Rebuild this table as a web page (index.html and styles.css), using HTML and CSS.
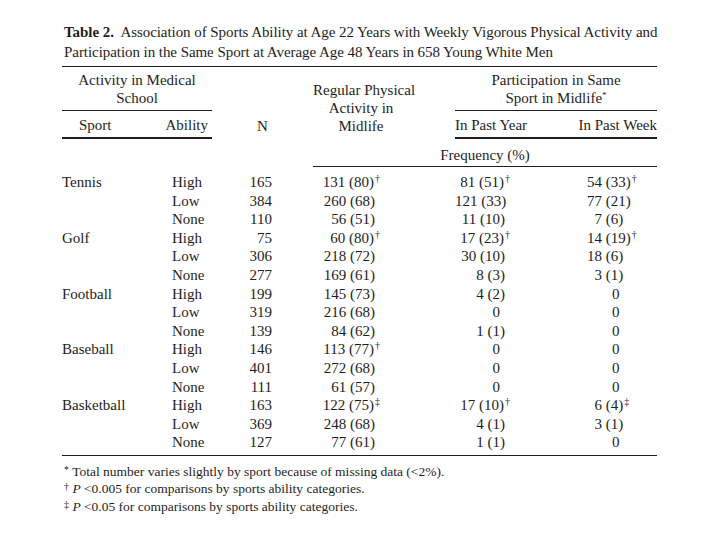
FILE: index.html
```html
<!DOCTYPE html>
<html lang="en">
<head>
<meta charset="utf-8">
<title>Table 2</title>
<link rel="stylesheet" href="styles.css">
</head>
<body>
<div class="page">
  <h1 class="title"><b>Table 2.</b>&nbsp; Association of Sports Ability at Age 22 Years with Weekly Vigorous Physical Activity and<br>Participation in the Same Sport at Average Age 48 Years in 658 Young White Men</h1>
  <table class="tbl">
    <colgroup>
      <col class="c1"><col class="c2"><col class="c3"><col class="c4"><col class="c5"><col class="c6">
    </colgroup>
    <thead>
      <tr class="hr1">
        <th colspan="2" class="grp">Activity in Medical<br>School</th>
        <th rowspan="2" class="hn">N</th>
        <th rowspan="2" class="hreg">Regular Physical<br>Activity in<br>Midlife</th>
        <th colspan="2" class="grp">Participation in Same<br>Sport in Midlife<span class="ast">*</span></th>
      </tr>
      <tr class="hr2">
        <th class="hsport">Sport</th>
        <th class="hab">Ability</th>
        <th class="hyr">In Past Year</th>
        <th class="hwk">In Past Week</th>
      </tr>
      <tr class="hr3">
        <td colspan="3"></td>
        <td colspan="3" class="freq">Frequency (%)</td>
      </tr>
    </thead>
    <tbody>
      <tr class="first"><td class="sp">Tennis</td><td class="ab">High</td><td class="n">165</td><td class="reg">131 (80)<span class="d">†</span></td><td class="yr">81 (51)<span class="d">†</span></td><td class="wk"><span class="num">54</span> (33)<span class="d">†</span></td></tr>
      <tr><td class="sp"></td><td class="ab">Low</td><td class="n">384</td><td class="reg">260 (68)</td><td class="yr">121 (33)</td><td class="wk"><span class="num">77</span> (21)</td></tr>
      <tr><td class="sp"></td><td class="ab">None</td><td class="n">110</td><td class="reg">56 (51)</td><td class="yr">11 (10)</td><td class="wk"><span class="num">7</span> (6)</td></tr>
      <tr><td class="sp">Golf</td><td class="ab">High</td><td class="n">75</td><td class="reg">60 (80)<span class="d">†</span></td><td class="yr">17 (23)<span class="d">†</span></td><td class="wk"><span class="num">14</span> (19)<span class="d">†</span></td></tr>
      <tr><td class="sp"></td><td class="ab">Low</td><td class="n">306</td><td class="reg">218 (72)</td><td class="yr">30 (10)</td><td class="wk"><span class="num">18</span> (6)</td></tr>
      <tr><td class="sp"></td><td class="ab">None</td><td class="n">277</td><td class="reg">169 (61)</td><td class="yr">8 (3)</td><td class="wk"><span class="num">3</span> (1)</td></tr>
      <tr><td class="sp">Football</td><td class="ab">High</td><td class="n">199</td><td class="reg">145 (73)</td><td class="yr">4 (2)</td><td class="wk zero">0</td></tr>
      <tr><td class="sp"></td><td class="ab">Low</td><td class="n">319</td><td class="reg">216 (68)</td><td class="yr zero">0</td><td class="wk zero">0</td></tr>
      <tr><td class="sp"></td><td class="ab">None</td><td class="n">139</td><td class="reg">84 (62)</td><td class="yr">1 (1)</td><td class="wk zero">0</td></tr>
      <tr><td class="sp">Baseball</td><td class="ab">High</td><td class="n">146</td><td class="reg">113 (77)<span class="d">†</span></td><td class="yr zero">0</td><td class="wk zero">0</td></tr>
      <tr><td class="sp"></td><td class="ab">Low</td><td class="n">401</td><td class="reg">272 (68)</td><td class="yr zero">0</td><td class="wk zero">0</td></tr>
      <tr><td class="sp"></td><td class="ab">None</td><td class="n">111</td><td class="reg">61 (57)</td><td class="yr zero">0</td><td class="wk zero">0</td></tr>
      <tr><td class="sp">Basketball</td><td class="ab">High</td><td class="n">163</td><td class="reg">122 (75)<span class="d">‡</span></td><td class="yr">17 (10)<span class="d">†</span></td><td class="wk"><span class="num">6</span> (4)<span class="d">‡</span></td></tr>
      <tr><td class="sp"></td><td class="ab">Low</td><td class="n">369</td><td class="reg">248 (68)</td><td class="yr">4 (1)</td><td class="wk"><span class="num">3</span> (1)</td></tr>
      <tr class="last"><td class="sp"></td><td class="ab">None</td><td class="n">127</td><td class="reg">77 (61)</td><td class="yr">1 (1)</td><td class="wk zero">0</td></tr>
    </tbody>
  </table>
  <div class="notes">
    <p><span class="mk">*</span> Total number varies slightly by sport because of missing data (&lt;2%).</p>
    <p><span class="mk">†</span> <i>P</i> &lt;0.005 for comparisons by sports ability categories.</p>
    <p><span class="mk">‡</span> <i>P</i> &lt;0.05 for comparisons by sports ability categories.</p>
  </div>
</div>
</body>
</html>
```
FILE: styles.css
```css
html, body {
  margin: 0;
  padding: 0;
  background: #ffffff;
}
body {
  font-family: "Liberation Serif", "Times New Roman", serif;
  color: #1e1e1e;
}
.page {
  width: 595px;
  padding: 22px 0 0 62px;
}
.title {
  margin: 0;
  padding-left: 2px;
  font-size: 15px;
  font-weight: normal;
  line-height: 20px;
  letter-spacing: -0.06px;
  white-space: nowrap;
}
.title b {
  font-weight: bold;
}
.tbl {
  width: 595px;
  margin-top: 4px;
  table-layout: fixed;
  border-collapse: collapse;
  border-top: 1px solid #1e1e1e;
  border-bottom: 1px solid #1e1e1e;
  font-size: 15px;
}
.c1 { width: 103px; }
.c2 { width: 47px; }
.c3 { width: 101px; }
.c4 { width: 142px; }
.c5 { width: 100px; }
.c6 { width: 102px; }
th, td {
  padding: 0;
  font-weight: normal;
  white-space: nowrap;
}
th {
  line-height: 18px;
}
.grp {
  text-align: center;
  padding: 4px 0 3px;
  border-bottom: 1px solid #1e1e1e;
  vertical-align: top;
}
.ast {
  font-size: 9px;
  line-height: 0;
  vertical-align: 5px;
}
.hn {
  text-align: center;
  vertical-align: bottom;
  padding-bottom: 3px;
}
.hreg {
  text-align: center;
  vertical-align: bottom;
  padding: 0 46px 3px 0;
}
.hr2 th {
  padding-top: 5px;
  padding-bottom: 3px;
  border-bottom: 2px solid #1e1e1e;
}
.hr2 .hsport { text-align: left; padding-left: 17px; }
.hr2 .hab { text-align: right; padding-right: 4px; }
.hr2 .hyr { text-align: left; }
.hr2 .hwk { text-align: right; }
.hr3 td {
  line-height: 18px;
  padding: 7px 0 2px;
}
.freq {
  text-align: center;
  border-bottom: 1px solid #1e1e1e;
}
tbody td {
  line-height: 18.6px;
  padding: 0;
}
tbody tr.first td { padding-top: 6px; }
tbody tr.last td { padding-bottom: 3px; }
.sp { text-align: left; }
.ab { text-align: left; padding-left: 7px; }
.n { text-align: right; padding-right: 41px; }
.reg { text-align: right; padding-right: 80px; }
.yr { text-align: right; padding-right: 50px; }
.yr.zero { padding-right: 55px; }
.wk { text-align: left; padding-left: 32px; }
.wk.zero { padding-left: 57px; }
.num {
  display: inline-block;
  width: 15px;
  text-align: right;
}
.d {
  display: inline-block;
  width: 0;
  font-size: 10px;
  line-height: 0;
  vertical-align: 5px;
  padding-left: 1px;
}
.notes {
  padding-top: 7px;
  font-size: 13.5px;
  line-height: 17.5px;
}
.notes p {
  margin: 0;
  padding-left: 2px;
}
.mk {
  font-size: 10px;
  line-height: 0;
  vertical-align: 3px;
}
```
